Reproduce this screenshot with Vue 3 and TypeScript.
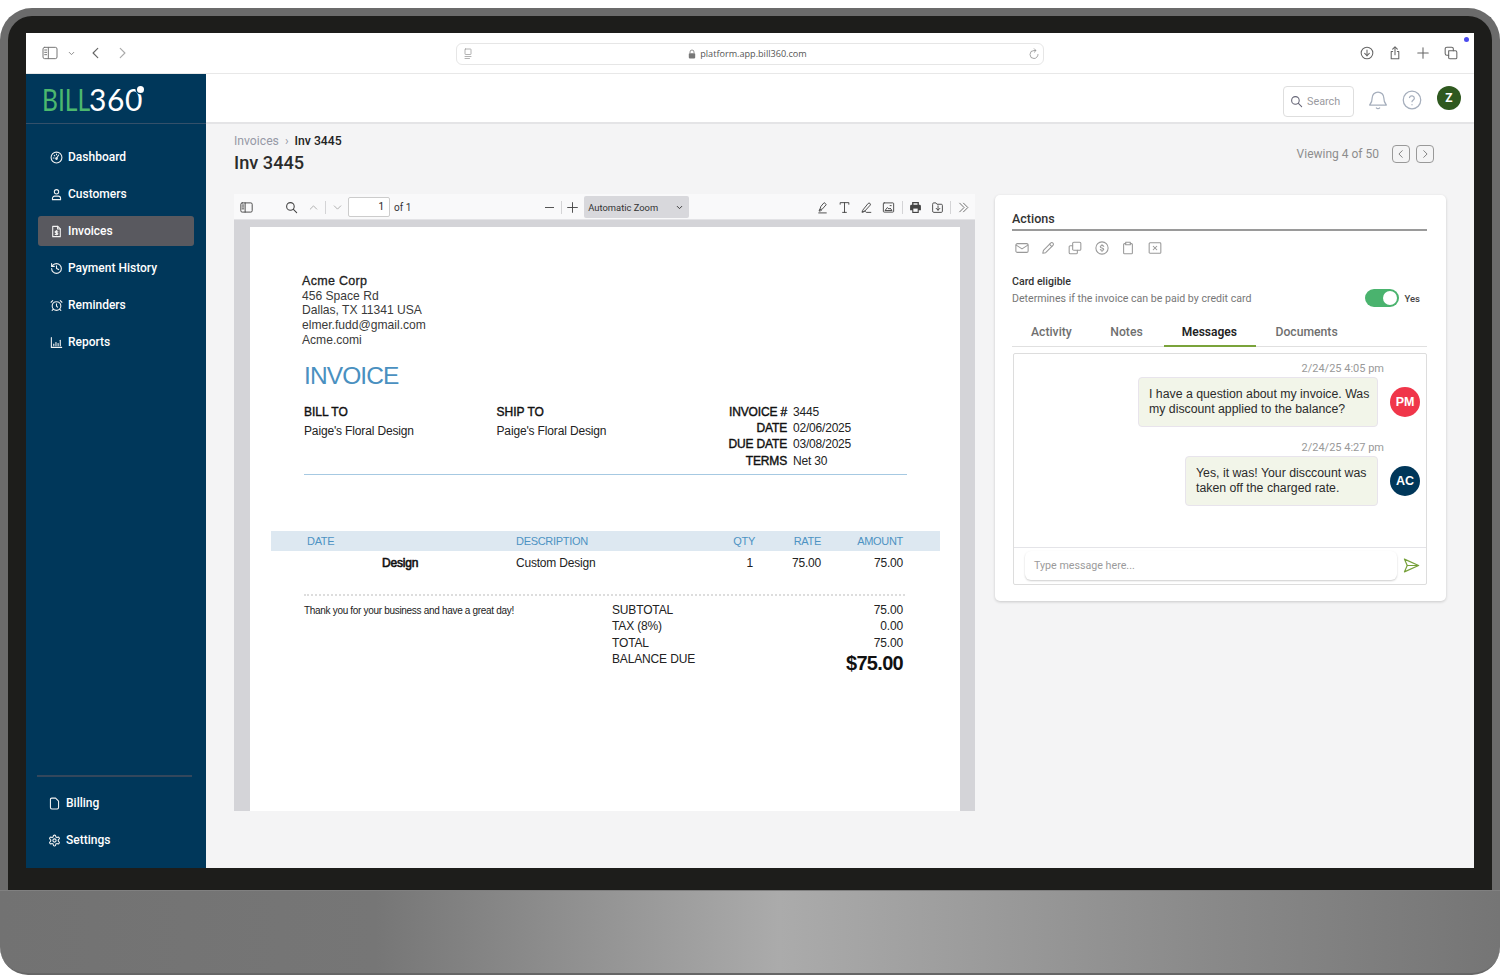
<script setup lang="ts">
import { h, type FunctionalComponent } from 'vue'

const c = (x: number, y: number, r: number) => `M${x - r} ${y}a${r} ${r} 0 1 0 ${2 * r} 0a${r} ${r} 0 1 0 ${-2 * r} 0`

const icons: Record<string, string[]> = {
  gauge: [c(12, 12, 10), 'M12 13.5l4-6', 'M6 13h1.5', 'M7.8 8l1 1', 'M12 5.5V7', c(12, 14, 1.5)],
  user: [c(12, 7, 4), 'M4.5 21.5v-2.5a4 4 0 0 1 4-4h7a4 4 0 0 1 4 4v2.5z'],
  invoice: ['M5 2.5h9.5l4.5 4.5v14.5H5z', 'M14 2.5V7.500h5', 'M12 10v8', 'M14.500 11.500h-3.500a1.500 1.500 0 0 0 0 3h2a1.500 1.500 0 0 1 0 3H9.500'],
  history: ['M3 12a9 9 0 1 0 9-9 9.750 9.750 0 0 0-6.740 2.740L3 8', 'M3 3v5h5', 'M12 7v5l4 2'],
  alarm: [c(12, 13, 8), 'M12 9v4l2 2', 'M5 3 2 6', 'M22 6l-3-3', 'M6.380 18.700 4 21', 'M17.640 18.670 20 21'],
  chart: ['M2.500 3v18h19', 'M7 18v-3', 'M11 18v-6', 'M15 18v-4', 'M19 18V8'],
  file: ['M14 2H7a2.500 2.500 0 0 0-2.500 2.500v15A2.500 2.500 0 0 0 7 22h10a2.500 2.500 0 0 0 2.500-2.500V7.500z'],
  gear: ['M12.220 2h-.440a2 2 0 0 0-2 2v.180a2 2 0 0 1-1 1.730l-.430.250a2 2 0 0 1-2 0l-.150-.080a2 2 0 0 0-2.730.730l-.220.380a2 2 0 0 0 .730 2.730l.150.100a2 2 0 0 1 1 1.720v.510a2 2 0 0 1-1 1.740l-.150.090a2 2 0 0 0-.730 2.730l.220.380a2 2 0 0 0 2.730.730l.150-.080a2 2 0 0 1 2 0l.430.250a2 2 0 0 1 1 1.730V20a2 2 0 0 0 2 2h.440a2 2 0 0 0 2-2v-.180a2 2 0 0 1 1-1.730l.430-.250a2 2 0 0 1 2 0l.150.080a2 2 0 0 0 2.730-.730l.220-.390a2 2 0 0 0-.730-2.730l-.150-.080a2 2 0 0 1-1-1.740v-.500a2 2 0 0 1 1-1.740l.150-.090a2 2 0 0 0 .730-2.730l-.220-.380a2 2 0 0 0-2.730-.730l-.150.080a2 2 0 0 1-2 0l-.430-.250a2 2 0 0 1-1-1.730V4a2 2 0 0 0-2-2z', c(12, 12, 3)],
  sidebar: ['M4 3.500h16a2.500 2.500 0 0 1 2.500 2.500v12a2.500 2.500 0 0 1-2.500 2.500H4A2.500 2.500 0 0 1 1.500 18V6A2.500 2.500 0 0 1 4 3.500z', 'M9.500 3.500v17', 'M4 7.500h3', 'M4 11h3', 'M4 14.500h3'],
  down: ['M6 9l6 6 6-6'],
  up: ['M6 15l6-6 6 6'],
  left: ['M15 4l-8 8 8 8'],
  right: ['M9 4l8 8-8 8'],
  download: [c(12, 12, 10), 'M12 7v9.500', 'M8 12.500l4 4 4-4'],
  share: ['M8 9.500H5.500v12.500h13V9.500H16', 'M12 15V2', 'M8 5.500L12 1.500l4 4'],
  plus: ['M12 3v18', 'M3 12h18'],
  tabs: ['M8 8h11.500A2.500 2.500 0 0 1 22 10.500V20a2 2 0 0 1-2 2h-10a2 2 0 0 1-2-2z', 'M16 8V5a3 3 0 0 0-3-3H5a3 3 0 0 0-3 3v8a3 3 0 0 0 3 3h3'],
  page: ['M7 2h10a1 1 0 0 1 1 1v9a1 1 0 0 1-1 1H7a1 1 0 0 1-1-1V3a1 1 0 0 1 1-1z', 'M6 17h12', 'M6 21h9'],
  reload: ['M20 13a8 8 0 1 1-8-8h3', 'M12.500 1.500L16 5l-3.500 3.500'],
  search: [c(10, 10, 7), 'M15.500 15.500L21.500 21.500'],
  bell: ['M12 2.500a7 7 0 0 0-7 7c0 6-3 8-3 8.500h20c0-.5-3-2.500-3-8.500a7 7 0 0 0-7-7z', 'M10 21.500c1 1.200 3 1.200 4 0'],
  help: [c(12, 12, 10.500), 'M9 9a3 3 0 0 1 5.800 1c0 2-2.800 2.500-2.800 4', 'M12 17.500v.300'],
  highlight: ['M5 22h14', 'M7 16l2-6 6-7 4 3.500-6.500 7.500z', 'M7 16l-1.500 2.500h3L10 17'],
  text: ['M4 6V3h16v3', 'M12 3v18', 'M8.500 21h7'],
  ink: ['M4 21c3 0 3-2 5-2s1 2 3 2h8', 'M5 17L15 4.500c2-2 5.500.500 4 3L9 18.500l-4.500 1z'],
  image: ['M4 3.500h16a1.500 1.500 0 0 1 1.500 1.500v14a1.500 1.500 0 0 1-1.500 1.500H4A1.500 1.500 0 0 1 2.500 19V5A1.500 1.500 0 0 1 4 3.500z', 'M6 17l4-5 3 3 2-2 3 4z', 'M15 8.500h2'],
  save: ['M3 5.500A2 2 0 0 1 5 3.500h4l2 2.500h8a2 2 0 0 1 2 2V19a2 2 0 0 1-2 2H5a2 2 0 0 1-2-2z', 'M13 9v8', 'M9.500 13.500L13 17l3.500-3.500'],
  more: ['M5 4l8 8-8 8', 'M12 4l8 8-8 8'],
  mail: ['M4 4.500h16A2.500 2.500 0 0 1 22.500 7v10a2.500 2.500 0 0 1-2.500 2.500H4A2.500 2.500 0 0 1 1.500 17V7A2.500 2.500 0 0 1 4 4.500z', 'M2 7l10 6.500L22 7'],
  pencil: ['M3 21l1.200-5L16.500 3.500a2.500 2.500 0 0 1 4 4L8 20z', 'M14.500 5.500l4 4'],
  copy: ['M10 2h10a2 2 0 0 1 2 2v10a2 2 0 0 1-2 2H10a2 2 0 0 1-2-2V4a2 2 0 0 1 2-2z', 'M8 8H4a2 2 0 0 0-2 2v10a2 2 0 0 0 2 2h10a2 2 0 0 0 2-2v-4'],
  dollar: [c(12, 12, 10.500), 'M15 9.200c-.500-1.700-5.500-2-6 .500-.500 3 6 1.600 6 4.600 0 2.300-5.500 2.200-6 .200', 'M12 6v1.300', 'M12 16.700V18'],
  clipboard: ['M8 4.500H6A1.500 1.500 0 0 0 4.500 6v14.500A1.500 1.500 0 0 0 6 22h12a1.500 1.500 0 0 0 1.500-1.500V6A1.500 1.500 0 0 0 18 4.500h-2', 'M8 2h8v4.500H8z'],
  cancel: ['M3.500 3h17A1.500 1.500 0 0 1 22 4.500v15a1.500 1.500 0 0 1-1.500 1.500h-17A1.500 1.500 0 0 1 2 19.500v-15A1.500 1.500 0 0 1 3.500 3z', 'M9 9l6 6', 'M15 9l-6 6'],
  send: ['M2 3l20 9-20 9 4-9z', 'M6 12h16'],
}

const Ic: FunctionalComponent<{ n: string }> = (props) =>
  h(
    'svg',
    { viewBox: '0 0 24 24', fill: 'none', stroke: 'currentColor', 'stroke-width': 2, 'stroke-linecap': 'round', 'stroke-linejoin': 'round' },
    icons[props.n].map((d) => h('path', { d })),
  )
Ic.props = ['n']

const nav = [
  { label: 'Dashboard', icon: 'gauge' },
  { label: 'Customers', icon: 'user' },
  { label: 'Invoices', icon: 'invoice', active: true },
  { label: 'Payment History', icon: 'history' },
  { label: 'Reminders', icon: 'alarm' },
  { label: 'Reports', icon: 'chart' },
]
const navBottom = [
  { label: 'Billing', icon: 'file' },
  { label: 'Settings', icon: 'gear' },
]
const actionIcons = ['mail', 'pencil', 'copy', 'dollar', 'clipboard', 'cancel']
const tabs = ['Activity', 'Notes', 'Messages', 'Documents']
const meta = [
  ['INVOICE #', '3445'],
  ['DATE', '02/06/2025'],
  ['DUE DATE', '03/08/2025'],
  ['TERMS', 'Net 30'],
]
const messages = [
  { time: '2/24/25 4:05 pm', lines: ['I have a question about my invoice. Was', 'my discount applied to the balance?'], who: 'PM', cls: 'first' },
  { time: '2/24/25 4:27 pm', lines: ['Yes, it was! Your disccount was', 'taken off the charged rate.'], who: 'AC', cls: 'second' },
]
const totals = [
  ['SUBTOTAL', '75.00'],
  ['TAX (8%)', '0.00'],
  ['TOTAL', '75.00'],
]
</script>

<template>
  <div class="device">
    <div class="bezel">
      <div class="screen">
        <header class="browser">
          <Ic n="sidebar" class="b-side" />
          <Ic n="down" class="b-caret" />
          <Ic n="left" class="b-back" />
          <Ic n="right" class="b-fwd" />
          <div class="urlbar">
            <Ic n="page" class="u-page" />
            <span class="u-mid">
              <svg class="u-lock" viewBox="0 0 10 12"><path d="M2.500 5V3.500a2.500 2.500 0 0 1 5 0V5" fill="none" stroke="#777" stroke-width="1" /><rect x="1" y="5" width="8" height="6.500" rx="1" fill="#777" /></svg>
              platform.app.bill360.com
            </span>
            <Ic n="reload" class="u-reload" />
          </div>
          <div class="b-right">
            <Ic n="download" />
            <Ic n="share" />
            <Ic n="plus" />
            <Ic n="tabs" />
          </div>
          <i class="b-dot"></i>
        </header>
        <div class="app">
          <aside class="side">
            <div class="logo"><span class="l-green">BILL</span><span class="l-white">360<i class="l-dot"></i></span></div>
            <nav class="nav">
              <a v-for="n in nav" :key="n.label" class="nav-item" :class="{ active: n.active }">
                <Ic :n="n.icon" class="nav-ic" />{{ n.label }}
              </a>
            </nav>
            <nav class="nav-bottom">
              <a v-for="n in navBottom" :key="n.label" class="nav-item">
                <Ic :n="n.icon" class="nav-ic" />{{ n.label }}
              </a>
            </nav>
          </aside>
          <main class="main">
            <div class="topbar">
              <div class="search"><Ic n="search" class="s-ic" /><span>Search</span></div>
              <Ic n="bell" class="t-bell" />
              <Ic n="help" class="t-help" />
              <div class="t-avatar">Z</div>
            </div>
            <div class="content">
              <div class="head">
                <div>
                  <div class="crumb"><span class="c-link">Invoices</span><span class="c-sep">›</span><b>Inv 3445</b></div>
                  <h1>Inv 3445</h1>
                </div>
                <div class="viewing">
                  <span>Viewing 4 of 50</span>
                  <button class="pg first-pg"><Ic n="left" /></button>
                  <button class="pg"><Ic n="right" /></button>
                </div>
              </div>
              <div class="cols">
                <section class="viewer">
                  <div class="pdf-bar">
                    <Ic n="sidebar" class="p-ic p-side" />
                    <Ic n="search" class="p-ic p-search" />
                    <Ic n="up" class="p-ic p-up light" />
                    <i class="p-sep"></i>
                    <Ic n="down" class="p-ic p-dn light" />
                    <div class="p-input">1</div>
                    <span class="p-of">of 1</span>
                    <span class="p-minus"></span>
                    <i class="p-sep s2"></i>
                    <Ic n="plus" class="p-ic p-plus" />
                    <div class="p-zoom"><span>Automatic Zoom</span><Ic n="down" /></div>
                    <Ic n="highlight" class="p-ic p-a" />
                    <Ic n="text" class="p-ic p-b" />
                    <Ic n="ink" class="p-ic p-b" />
                    <Ic n="image" class="p-ic p-b" />
                    <i class="p-sep s3"></i>
                    <svg class="p-ic p-print" viewBox="0 0 24 24">
                      <path d="M7 8V3h10v5" fill="none" stroke="#444" stroke-width="2.500" />
                      <path d="M4.500 7h15A2.500 2.500 0 0 1 22 9.500V17h-4v5H6v-5H2V9.500A2.500 2.500 0 0 1 4.500 7z" fill="#444" />
                      <rect x="8" y="14" width="8" height="6" fill="#f9f9fa" />
                    </svg>
                    <Ic n="save" class="p-ic p-save" />
                    <i class="p-sep s4"></i>
                    <Ic n="more" class="p-ic p-more" />
                  </div>
                  <article class="page">
                    <div class="from">
                      <strong>Acme Corp</strong>
                      <div>456 Space Rd</div>
                      <div>Dallas, TX 11341 USA</div>
                      <div>elmer.fudd@gmail.com</div>
                      <div>Acme.comi</div>
                    </div>
                    <div class="inv-title">INVOICE</div>
                    <div class="parties">
                      <div class="party"><b>BILL TO</b><div>Paige's Floral Design</div></div>
                      <div class="party"><b>SHIP TO</b><div>Paige's Floral Design</div></div>
                      <div class="meta">
                        <div v-for="m in meta" :key="m[0]" class="meta-row"><b>{{ m[0] }}</b><span>{{ m[1] }}</span></div>
                      </div>
                    </div>
                    <div class="t-head t-grid">
                      <span class="t-date">DATE</span><span>DESCRIPTION</span><span class="r">QTY</span><span class="r">RATE</span><span class="r">AMOUNT</span>
                    </div>
                    <div class="t-row t-grid">
                      <b class="t-item">Design</b><span>Custom Design</span><span class="r qty">1</span><span class="r">75.00</span><span class="r">75.00</span>
                    </div>
                    <div class="dots"></div>
                    <div class="summary">
                      <div class="thanks">Thank you for your business and have a great day!</div>
                      <div class="sum-col">
                        <div v-for="t in totals" :key="t[0]" class="sum-row"><span>{{ t[0] }}</span><span>{{ t[1] }}</span></div>
                        <div class="sum-row due"><span>BALANCE DUE</span><strong>$75.00</strong></div>
                      </div>
                    </div>
                  </article>
                </section>
                <section class="card">
                  <h2>Actions</h2>
                  <div class="actions">
                    <Ic v-for="a in actionIcons" :key="a" :n="a" />
                  </div>
                  <div class="eligible">
                    <div>
                      <div class="e-title">Card eligible</div>
                      <div class="e-desc">Determines if the invoice can be paid by credit card</div>
                    </div>
                    <div class="toggle-wrap"><span class="toggle"><i></i></span><span class="yes">Yes</span></div>
                  </div>
                  <div class="tabs">
                    <span v-for="t in tabs" :key="t" class="tab" :class="{ on: t === 'Messages' }">{{ t }}</span>
                  </div>
                  <div class="msgbox">
                    <div class="thread">
                      <div v-for="m in messages" :key="m.who" class="msg" :class="m.cls">
                        <div class="time">{{ m.time }}</div>
                        <div class="msg-row">
                          <div class="bubble"><div v-for="l in m.lines" :key="l">{{ l }}</div></div>
                          <div class="who" :class="m.who.toLowerCase()">{{ m.who }}</div>
                        </div>
                      </div>
                    </div>
                    <div class="composer">
                      <div class="input">Type message here...</div>
                      <Ic n="send" class="send" />
                    </div>
                  </div>
                </section>
              </div>
            </div>
          </main>
        </div>
      </div>
    </div>
    <div class="chin"></div>
  </div>
</template>

<style>
html, body { margin: 0; background: #fff; }
</style>

<style scoped>
* { box-sizing: border-box; }
svg { display: block; flex: none; }
.device { width: 1500px; height: 975px; padding-top: 8px; background: #fff; font-family: Roboto, "Liberation Sans", sans-serif; overflow: hidden; position: relative; }
.bezel { height: 882px; background: #1d1d1b; border: 8px solid #6b6b6b; border-bottom: 0; border-radius: 32px 32px 0 0; padding: 17px 18px 22px; }
.screen { width: 1448px; height: 835px; background: #fff; display: flex; flex-direction: column; }
.chin { height: 85px; border-radius: 0 0 28px 28px; border-top: 1px solid #808080; border-bottom: 2px solid #666; background: linear-gradient(90deg, #727272 0%, #767676 25%, #ababab 52%, #8a8a8a 80%, #757575 100%); }

.browser { height: 41px; flex: none; display: flex; align-items: center; border-bottom: 1px solid #e8e8e8; padding-left: 16px; position: relative; color: #777; }
.b-side { width: 16px; height: 16px; stroke-width: 1.5; margin-top: -1px; }
.b-caret { width: 9px; height: 9px; margin-left: 9px; stroke-width: 2.500; color: #888; }
.b-back { width: 14px; height: 14px; margin-left: 13px; stroke-width: 2; color: #666; margin-top: -1px; }
.b-fwd { width: 14px; height: 14px; margin-left: 12px; stroke-width: 2; color: #aaa; margin-top: -1px; }
.urlbar { width: 588px; height: 22px; margin-left: 327px; margin-top: 1px; border: 1px solid #e6e6e6; border-radius: 6px; display: flex; align-items: center; justify-content: space-between; padding: 0 3px 0 5px; }
.u-page { width: 12px; height: 12px; stroke-width: 1.500; color: #999; }
.u-reload { width: 12px; height: 12px; stroke-width: 1.500; color: #888; }
.u-mid { display: flex; align-items: center; gap: 4px; font: 400 9.100px "Open Sans", sans-serif; color: #555; margin-left: -7px; }
.u-lock { width: 8px; height: 10px; }
.b-right { display: flex; margin-left: auto; margin-right: 16px; gap: 14px; color: #666; }
.b-right svg { width: 14px; height: 14px; stroke-width: 1.800; }
.b-dot { position: absolute; top: 4px; right: 5px; width: 5px; height: 5px; border-radius: 50%; background: #4a4aee; }

.app { flex: 1; display: flex; min-height: 0; }
.side { width: 180px; flex: none; background: #00375a; display: flex; flex-direction: column; color: #fff; }
.logo { height: 50px; border-bottom: 1px solid #34506a; display: flex; align-items: center; padding: 1px 0 0 16px; font: 400 30px Lato, sans-serif; }
.l-green { display: inline-block; width: 47px; color: #4cb86e; transform: scaleX(.82); transform-origin: left center; }
.l-white { position: relative; letter-spacing: .6px; line-height: 1; }
.l-dot { position: absolute; right: -1px; top: 2px; width: 7px; height: 7px; border-radius: 50%; background: #fff; box-shadow: 0 0 0 1.500px #00375a; }
.nav { padding: 18px 12px 0; display: flex; flex-direction: column; gap: 7px; flex: 1; }
.nav-item { height: 30px; display: flex; align-items: center; padding-left: 12px; border-radius: 3px; font-size: 12px; font-weight: 500; color: #fff; }
.nav-item.active { background: #59595f; }
.nav-ic { width: 13px; height: 13px; margin-right: 5px; stroke-width: 2; color: #f2f2f2; }
.nav-bottom { margin: 0 14px 13px 11px; border-top: 2px solid #33475c; padding-top: 11px; display: flex; flex-direction: column; gap: 7px; }
.nav-bottom .nav-item { padding-left: 11px; }

.main { flex: 1; min-width: 0; background: #f4f4f5; display: flex; flex-direction: column; }
.topbar { height: 50px; flex: none; background: #fff; border-bottom: 2px solid #e4e4e6; display: flex; align-items: center; padding-left: 1077px; }
.search { width: 71px; height: 31px; margin-top: 6px; border: 1px solid #dedede; border-radius: 4px; display: flex; align-items: center; padding-left: 6px; gap: 4px; font-size: 10.800px; color: #9a9aa0; }
.s-ic { width: 13px; height: 13px; color: #667; stroke-width: 2; }
.t-bell { width: 20px; height: 20px; margin-left: 14px; margin-top: 4px; color: #a5aebc; stroke-width: 1.500; }
.t-help { width: 20px; height: 20px; margin-left: 14px; margin-top: 4px; color: #a5aebc; stroke-width: 1.500; }
.t-avatar { width: 24px; height: 24px; border-radius: 50%; margin-left: 15px; margin-bottom: 1px; background: #2f591f; color: #fff; display: flex; align-items: center; justify-content: center; font-size: 12px; font-weight: 700; }

.content { padding: 10px 28px 0; flex: 1; }
.head { display: flex; justify-content: space-between; height: 60px; }
.crumb { font-size: 12.200px; line-height: 14px; color: #222; }
.crumb b { font-weight: 500; }
.c-link { color: #9699a6; }
.c-sep { color: #9699a6; margin: 0 6px; }
h1 { margin: 2px 0 0; font-size: 18.200px; line-height: 26px; font-weight: 500; color: #2b2b2b; }
.viewing { display: flex; align-items: flex-start; color: #8d8d8d; font-size: 12px; padding: 11px 12px 0 0; line-height: 18px; }
.viewing span { margin-right: 13px; }
.pg { width: 18px; height: 18px; padding: 3px; border: 1px solid #999; border-radius: 4px; background: transparent; color: #777; }
.pg svg { width: 10px; height: 10px; stroke-width: 2.200; }
.first-pg { margin-right: 6px; }

.cols { display: flex; align-items: flex-start; gap: 20px; }
.viewer { width: 741px; height: 617px; background: #d4d4d8; flex: none; }
.pdf-bar { height: 26px; padding-top: 1px; background: #f9f9fa; border-bottom: 1px solid #e3e3e6; display: flex; align-items: center; color: #444; white-space: nowrap; }
.p-ic { width: 13px; height: 13px; stroke-width: 1.700; }
.p-side { margin-left: 6px; }
.p-search { margin-left: 32px; stroke-width: 2; }
.p-up { margin-left: 9px; }
.light { color: #aaa; }
.p-sep { width: 1px; height: 13px; background: #d4d4d6; flex: none; }
.p-up + .p-sep { margin-left: 5px; }
.p-dn { margin-left: 5px; }
.p-input { width: 42px; height: 20px; margin-left: 4px; background: #fff; border: 1px solid #ccc; border-radius: 2px; font-size: 10px; line-height: 18px; text-align: right; padding-right: 5px; color: #222; flex: none; }
.p-of { font-size: 10px; margin-left: 4px; color: #333; flex: none; }
.p-minus { width: 9px; height: 1px; background: #555; margin-left: 134px; flex: none; }
.s2 { margin-left: 7px; }
.p-plus { margin-left: 4px; }
.p-zoom { width: 105px; height: 22px; margin-left: 5px; background: #d8d8dc; border-radius: 2px; display: flex; align-items: center; justify-content: space-between; padding: 0 5px 0 4px; font-size: 9.400px; color: #333; flex: none; }
.p-zoom svg { width: 9px; height: 9px; stroke-width: 2.500; }
.p-a { margin-left: 127px; }
.p-b { margin-left: 9px; }
.s3 { margin-left: 6.500px; }
.p-print { margin-left: 6.500px; }
.p-save { margin-left: 8.500px; }
.s4 { margin-left: 6px; }
.p-more { margin-left: 6px; color: #666; }

.page { width: 710px; height: 584px; margin: 7px 0 0 16px; background: #fff; padding-top: 47px; font-family: "Liberation Sans", Arial, sans-serif; color: #222; font-size: 12px; }
.from { margin-left: 52px; font-size: 12.100px; line-height: 14.700px; color: #3a3a3a; }
.from strong { display: block; color: #222; font-weight: 400; font-size: 12.500px; -webkit-text-stroke: .3px #222; letter-spacing: .3px; }
.inv-title { margin: 13px 0 0 54px; font-size: 24.500px; line-height: 30px; letter-spacing: -.9px; color: #4a90c0; }
.parties { margin: 13px 0 0 54px; width: 603px; height: 71px; display: flex; border-bottom: 1.500px solid #a6c9e2; }
.party { width: 192.500px; line-height: 16px; letter-spacing: -.15px; }
.party b { display: block; margin-bottom: 3px; font-weight: 400; -webkit-text-stroke: .4px #111; color: #111; letter-spacing: 0; }
.meta { margin-left: 3px; width: 180px; }
.meta-row { display: flex; height: 16.400px; line-height: 16px; }
.meta-row b { width: 95px; text-align: right; font-weight: 400; -webkit-text-stroke: .4px #111; color: #111; letter-spacing: -.15px; white-space: nowrap; }
.meta-row span { margin-left: 6px; letter-spacing: -.2px; }
.t-grid { margin: 0 20px 0 21px; display: grid; grid-template-columns: 245px 172px 67px 66px 82px 37px; align-items: center; }
.r { text-align: right; }
.t-head { margin-top: 56px; height: 20px; background: #dde8f1; color: #4d93c3; font-size: 11px; letter-spacing: -.3px; }
.t-date { padding-left: 36px; }
.t-row { height: 24px; letter-spacing: -.2px; }
.qty { padding-right: 2px; }
.t-item { padding-left: 111px; font-weight: 400; -webkit-text-stroke: .6px #111; color: #111; }
.dots { margin: 19px 0 0 54px; width: 601px; border-top: 2px dotted #ddd; }
.summary { margin: 6.500px 0 0 54px; display: flex; width: 599px; }
.thanks { width: 308px; font-size: 10px; letter-spacing: -.31px; line-height: 16px; padding-top: .5px; }
.sum-col { flex: 1; }
.sum-row { display: flex; justify-content: space-between; height: 16.400px; line-height: 16px; letter-spacing: -.15px; }
.due strong { font-size: 20px; line-height: 24px; font-weight: 700; letter-spacing: -.7px; color: #111; }

.card { width: 451px; height: 406px; flex: none; margin-top: 1px; background: #fff; border-radius: 5px; box-shadow: 0 1px 3px rgba(0, 0, 0, .18); padding: 17px 19px 0 17px; }
h2 { margin: 0; font-size: 12.500px; font-weight: 500; line-height: 14px; color: #333; border-bottom: 2px solid #9a9a9a; padding-bottom: 3px; }
.actions { display: flex; margin-top: 10px; gap: 12.700px; color: #999; padding-left: 2.500px; }
.actions svg { width: 14px; height: 14px; stroke-width: 1.800; }
.eligible { display: flex; justify-content: space-between; margin-top: 20px; align-items: flex-end; }
.e-title { font-size: 10.600px; font-weight: 500; line-height: 14px; color: #333; }
.e-desc { font-size: 10.600px; line-height: 14px; margin-top: 3px; color: #777; }
.toggle-wrap { display: flex; align-items: center; gap: 6px; padding-right: 7px; margin-bottom: -1px; }
.toggle { width: 34px; height: 18px; background: #4ab36e; border-radius: 9px; padding: 2px; display: flex; justify-content: flex-end; }
.toggle i { width: 14px; height: 14px; border-radius: 50%; background: #fff; }
.yes { font-size: 9.500px; font-weight: 500; color: #444; }
.tabs { display: flex; margin-top: 8px; height: 33px; border-bottom: 1px solid #e0e0e0; }
.tab { padding: 3px 19.500px 0; line-height: 30px; height: 33px; font-size: 12.200px; font-weight: 500; color: #6f6f6f; }
.tab:first-child { padding: 3px 19px 0; }
.tab.on { color: #222; border-bottom: 2px solid #7aa33a; font-size: 12px; font-weight: 600; margin-left: 1.500px; padding: 3px 19px 0 18px; }
.msgbox { margin: 6px 0 0 1px; height: 232px; border: 1.500px solid #ddd; border-radius: 2px; display: flex; flex-direction: column; }
.thread { flex: 1; }
.msg-row { display: flex; justify-content: flex-end; align-items: center; padding-right: 6px; gap: 12px; }
.time { text-align: right; padding-right: 42px; font-size: 11px; line-height: 14px; color: #999; margin-top: 8px; margin-bottom: 1px; }
.second .time { margin-top: 14px; }
.bubble { height: 50px; padding-left: 10px; background: #f2f5e9; border: 1px solid #e8e4ec; border-radius: 4px; font: 12.300px/15px "Liberation Sans", Arial, sans-serif; color: #2b2b2b; display: flex; flex-direction: column; justify-content: center; white-space: nowrap; }
.first .bubble { width: 240px; }
.second .bubble { width: 193px; }
.who { width: 30px; height: 30px; border-radius: 50%; color: #fff; display: flex; align-items: center; justify-content: center; font: 700 12.500px "Liberation Sans", Arial, sans-serif; }
.pm { background: #f0364a; }
.ac { background: #00375a; }
.composer { height: 37.500px; flex: none; border-top: 1.500px solid #e4e4e8; display: flex; align-items: center; padding-left: 11px; }
.input { width: 372px; height: 29px; border-radius: 6px; box-shadow: 0 1px 2px rgba(0, 0, 0, .2); font-size: 10.700px; line-height: 29px; padding-left: 9px; color: #9b9b9b; }
.send { width: 17px; height: 17px; margin-left: 6px; stroke-width: 1.700; color: #76a03a; }
</style>
